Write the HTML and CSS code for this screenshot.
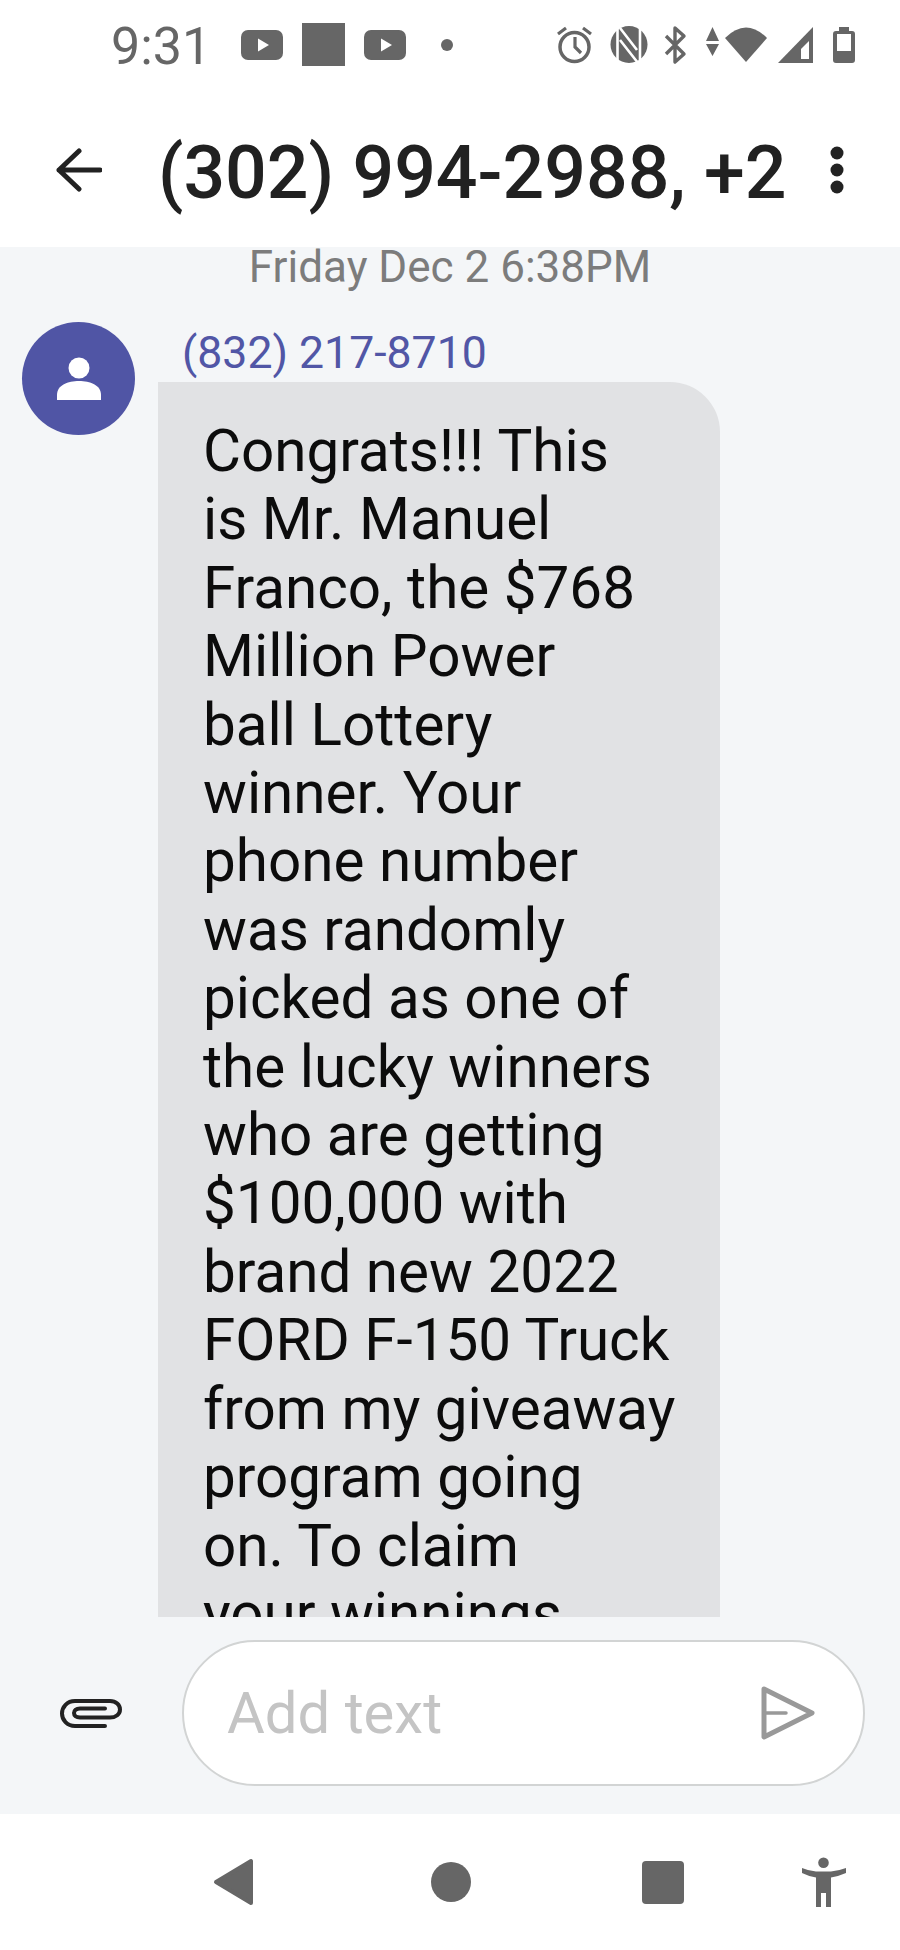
FILE: index.html
```html
<!DOCTYPE html>
<html lang="en">
<head>
<meta charset="utf-8">
<title>Messages</title>
<link rel="stylesheet" href="styles.css">
</head>
<body>
<div class="app">
  <header class="top">
    <div class="status">
      <span class="clock">9:31</span>
      <svg class="status-left" viewBox="241 20 212 50" aria-hidden="true">
        <rect x="241" y="30" width="42" height="30" rx="7" fill="#666"/>
        <path d="M258 38.500 L269 45 L258 51.500Z" fill="#fff"/>
        <rect x="302" y="23" width="43" height="43" fill="#666"/>
        <rect x="364" y="30" width="42" height="30" rx="7" fill="#666"/>
        <path d="M381 38.500 L392 45 L381 51.500Z" fill="#fff"/>
        <circle cx="447" cy="45" r="6" fill="#666"/>
      </svg>
      <svg class="status-right" viewBox="555 20 302 50" aria-hidden="true">
        <circle cx="574.500" cy="47" r="14.500" fill="none" stroke="#666" stroke-width="3.500"/>
        <path d="M575 37V47L581 53M558 34L566 28M591 34L583 28" fill="none" stroke="#666" stroke-width="3.200"/>
        <circle cx="629" cy="44.500" r="18.500" fill="#666"/>
        <path d="M617.500 26V63M640 26V63M620 28L637 50M620 40L638 63" fill="none" stroke="#fff" stroke-width="2.600"/>
        <path d="M666 36L684 54L675 62V28L684 36L666 54" fill="none" stroke="#666" stroke-width="3.400" stroke-linejoin="round"/>
        <path d="M712.500 27L719 41H706ZM706 44H719L712.500 56Z" fill="#666"/>
        <path d="M725 38Q746 17 767 38L746 62Z" fill="#666"/>
        <path d="M778 63L813 27V63Z" fill="#666"/>
        <path d="M801 49L809 41V59H801Z" fill="#fff"/>
        <path d="M839 31V27H849V31H852Q855 31 855 34V60Q855 63 852 63H836Q833 63 833 60V34Q833 31 836 31Z" fill="#666"/>
        <rect x="837" y="34" width="14" height="17" fill="#fff"/>
      </svg>
    </div>
    <div class="titlebar">
      <svg class="back" viewBox="0 0 46 44" aria-hidden="true">
        <path d="M23 3L3 22L23 41M3 22H44" fill="none" stroke="#222" stroke-width="5" stroke-linecap="round" stroke-linejoin="round"/>
      </svg>
      <h1 class="title">(302) 994-2988, +2</h1>
      <svg class="more" viewBox="0 0 14 48" aria-hidden="true">
        <circle cx="7" cy="7" r="6.500" fill="#222"/>
        <circle cx="7" cy="24" r="6.500" fill="#222"/>
        <circle cx="7" cy="41" r="6.500" fill="#222"/>
      </svg>
    </div>
  </header>

  <main class="thread">
    <div class="date">Friday Dec 2 6:38PM</div>
    <div class="message">
      <div class="avatar">
        <svg class="avatar-icon" viewBox="0 0 44 44" aria-hidden="true">
          <circle cx="22" cy="11" r="10.500" fill="#fff"/>
          <path d="M0 43V38C0 28 11 24 22 24S44 28 44 38V43Z" fill="#fff"/>
        </svg>
      </div>
      <div class="body">
        <div class="sender">(832) 217-8710</div>
        <div class="bubble">Congrats!!! This<br>is Mr. Manuel<br>Franco, the $768<br>Million Power<br>ball Lottery<br>winner. Your<br>phone number<br>was randomly<br>picked as one of<br>the lucky winners<br>who are getting<br>$100,000 with<br>brand new 2022<br>FORD F-150 Truck<br>from my giveaway<br>program going<br>on. To claim<br>your winnings</div>
      </div>
    </div>
  </main>

  <section class="composer">
    <svg class="clip" viewBox="0 0 64 34" aria-hidden="true">
      <path d="M46 29H16C8 29 3 23 3 16.500S8 4 16 4H51C57 4 61 8 61 12.500S57 20.500 51 20.500H21C17 20.500 15 18.500 15 16S17 11.500 21 11.500H46" fill="none" stroke="#222" stroke-width="4" stroke-linecap="round"/>
    </svg>
    <div class="field">
      <span class="placeholder">Add text</span>
      <svg class="send" viewBox="0 0 54 54" aria-hidden="true">
        <path d="M3 3L51 27L3 51Z" fill="none" stroke="#999" stroke-width="5" stroke-linejoin="round"/>
        <path d="M3 27H25" fill="none" stroke="#999" stroke-width="3.500" stroke-linecap="round"/>
      </svg>
    </div>
  </section>

  <nav class="nav">
    <svg class="nav-back" viewBox="0 0 42 48" aria-hidden="true">
      <path d="M38 3V45L3 24Z" fill="#666" stroke="#666" stroke-width="4" stroke-linejoin="round"/>
    </svg>
    <svg class="nav-home" viewBox="0 0 40 40" aria-hidden="true">
      <circle cx="20" cy="20" r="20" fill="#666"/>
    </svg>
    <svg class="nav-recent" viewBox="0 0 42 43" aria-hidden="true">
      <rect width="42" height="43" rx="4" fill="#666"/>
    </svg>
    <svg class="nav-a11y" viewBox="0 0 44 50" aria-hidden="true">
      <circle cx="21.500" cy="5.800" r="5.300" fill="#666"/>
      <path d="M0 11Q7 14 14 14.500H29Q36 14 44 11V16Q36 19.500 29 20.500V50H24V36H19V50H14V20.500Q7 19.500 0 16Z" fill="#666"/>
    </svg>
  </nav>
</div>
</body>
</html>
```

FILE: styles.css
```css
* { box-sizing: border-box; }

html, body {
  margin: 0;
  padding: 0;
  background: #fff;
}

body {
  font-family: Roboto, "Liberation Sans", sans-serif;
}

.app {
  width: 900px;
  height: 1950px;
  display: flex;
  flex-direction: column;
  overflow: hidden;
}

.top {
  height: 247px;
  flex: none;
  background: #fff;
}

.status {
  height: 90px;
  display: flex;
  align-items: flex-start;
  padding-left: 111px;
}

.clock {
  width: 130px;
  margin-top: 17px;
  font-size: 52px;
  line-height: 60px;
  color: #666;
}

.status-left {
  width: 212px;
  height: 50px;
  margin-top: 20px;
}

.status-right {
  width: 302px;
  height: 50px;
  margin-top: 20px;
  margin-left: 102px;
}

.titlebar {
  display: flex;
  align-items: center;
  height: 82px;
  margin-top: 39px;
  padding-left: 56px;
}

.back {
  width: 46px;
  height: 44px;
  flex: none;
}

.title {
  margin: 6px 0 0 56px;
  width: 672px;
  font-size: 73.400px;
  line-height: 82px;
  font-weight: 500;
  color: #212121;
  white-space: nowrap;
}

.more {
  width: 14px;
  height: 48px;
  flex: none;
}

.thread {
  height: 1370px;
  flex: none;
  overflow: hidden;
  background: #f4f6f8;
}

.date {
  text-align: center;
  font-size: 44px;
  line-height: 40px;
  color: #7c7c7c;
}

.message {
  display: flex;
  align-items: flex-start;
  margin-top: 35px;
  padding-left: 22px;
}

.avatar {
  width: 113px;
  height: 113px;
  flex: none;
  border-radius: 50%;
  background: #5055a5;
  display: flex;
  align-items: center;
  justify-content: center;
}

.avatar-icon {
  width: 44px;
  height: 44px;
}

.body {
  margin-left: 23px;
}

.sender {
  padding: 2px 0 0 24px;
  font-size: 44.600px;
  line-height: 58px;
  color: #5156a6;
}

.bubble {
  width: 562px;
  padding: 35px 20px 60px 45px;
  border-radius: 0 50px 0 0;
  background: #e1e2e4;
  font-size: 58.400px;
  line-height: 68.400px;
  color: #0c0c0c;
}

.composer {
  height: 197px;
  flex: none;
  display: flex;
  align-items: flex-start;
  padding: 23px 0 0 59px;
  background: #f4f6f8;
}

.clip {
  width: 64px;
  height: 34px;
  flex: none;
  margin-top: 57px;
}

.field {
  width: 683px;
  height: 146px;
  margin-left: 59px;
  display: flex;
  align-items: center;
  justify-content: space-between;
  padding: 0 48px 0 43px;
  border: 2px solid #d2d4d4;
  border-radius: 73px;
  background: #fff;
}

.placeholder {
  font-size: 58px;
  line-height: 66px;
  color: #c4c4c4;
}

.send {
  width: 54px;
  height: 54px;
}

.nav {
  height: 136px;
  flex: none;
  display: flex;
  align-items: center;
  padding-left: 213px;
  background: #fff;
}

.nav-back {
  width: 42px;
  height: 48px;
}

.nav-home {
  width: 40px;
  height: 40px;
  margin-left: 176px;
}

.nav-recent {
  width: 42px;
  height: 43px;
  margin-left: 171px;
}

.nav-a11y {
  width: 44px;
  height: 50px;
  margin-left: 118px;
}
```
